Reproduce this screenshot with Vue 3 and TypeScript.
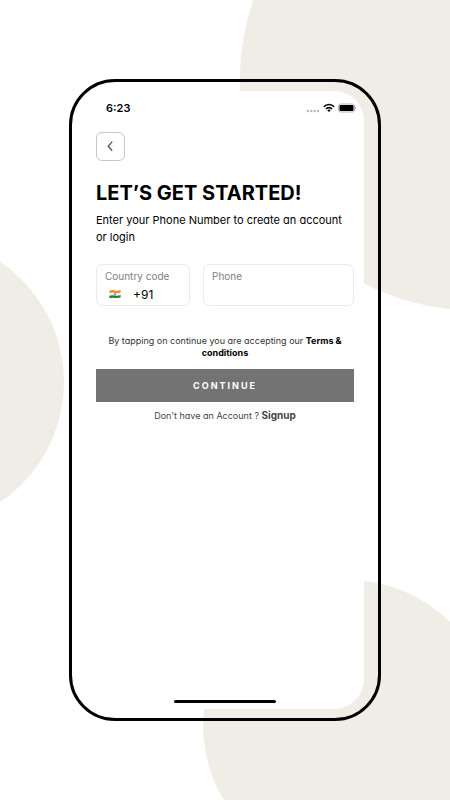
<script setup lang="ts">
import { ref } from 'vue'

const time = '6:23'
const countryCodes: string[] = ['+91']
const countryCode = ref<string>('+91')
const phone = ref<string>('')
</script>

<template>
  <main class="page">
    <svg class="backdrop" viewBox="0 0 450 800" preserveAspectRatio="xMidYMid slice" aria-hidden="true">
      <circle cx="472" cy="78" r="232" />
      <circle cx="-81" cy="382" r="145" />
      <circle cx="348" cy="725" r="145" />
    </svg>

    <div class="phone">
      <section class="screen">
        <header class="status">
          <span class="time">{{ time }}</span>
          <span class="indicators">
            <svg width="14" height="12" viewBox="0 0 14 12" aria-hidden="true">
              <g fill="#b9b9b9">
                <circle cx="1.8" cy="9" r="1.2" />
                <circle cx="5.2" cy="9" r="1.2" />
                <circle cx="8.6" cy="9" r="1.2" />
                <circle cx="12" cy="9" r="1.2" />
              </g>
            </svg>
            <svg width="12" height="12" viewBox="0 0 12 12" fill="none" stroke="#000" stroke-width="1.6" aria-hidden="true">
              <path d="M0.8 4.8C3.6 1.8 8.4 1.8 11.2 4.8" />
              <path d="M2.9 7C4.6 5.2 7.4 5.2 9.1 7" />
              <path d="M4.3 8.3Q6 6.9 7.7 8.3L6 10.1Z" fill="#000" stroke="none" />
            </svg>
            <svg width="18" height="12" viewBox="0 0 18 12" aria-hidden="true">
              <rect x="0.5" y="2" width="16" height="8" rx="2" fill="#fff" stroke="#a5a5a5" stroke-width="0.8" />
              <rect x="1.5" y="3" width="14" height="6" rx="1" fill="#000" />
              <path d="M17.2 4.6Q18 5 18 6T17.2 7.4Z" fill="#999" />
            </svg>
          </span>
        </header>

        <button class="back" type="button" aria-label="Back">
          <svg width="27" height="27" viewBox="0 0 27 27" fill="none" stroke="#555" stroke-width="1.3" aria-hidden="true">
            <path d="M15.2 8.6L11.2 13.2L15.2 17.8" />
          </svg>
        </button>

        <h1>LET’S GET STARTED!</h1>
        <p class="intro">Enter your Phone Number to create an account or login</p>

        <form class="form" @submit.prevent>
          <div class="fields">
            <div class="field">
              <label for="code">Country code</label>
              <div class="code">
                <svg class="flag" width="12" height="10" viewBox="0 0 12 10" aria-hidden="true">
                  <path d="M0.4 1.7Q3 0.6 6 1.4T11.6 1V3.8Q9 4.5 6 4T0.4 4.2Z" fill="#f28c28" />
                  <path d="M0.4 4Q3 3.2 6 3.9T11.6 3.4V6.4Q9 7 6 6.6T0.4 6.9Z" fill="#f1f1ec" />
                  <path d="M0.4 6.7Q3 5.8 6 6.5T11.6 6V8.6Q9 9.3 6 8.9T0.4 9.3Z" fill="#238536" />
                  <circle cx="6" cy="5.2" r="1" fill="#7777b5" />
                </svg>
                <select id="code" v-model="countryCode">
                  <option v-for="code in countryCodes" :key="code" :value="code">{{ code }}</option>
                </select>
              </div>
            </div>
            <div class="field wide">
              <label for="phone">Phone</label>
              <input id="phone" v-model="phone" type="tel" />
            </div>
          </div>

          <p class="terms">
            <span>By tapping on continue you are accepting our</span>
            {{ ' ' }}<a href="#terms"><span>Terms &amp;</span> <span>conditions</span></a>
          </p>
          <button class="continue" type="submit">CONTINUE</button>
        </form>

        <p class="signup">Don't have an Account ? <a href="#signup">Signup</a></p>

        <div class="home"></div>
      </section>
    </div>
  </main>
</template>

<style>
body {
  background: #fff;
}
</style>

<style scoped>
.page {
  position: relative;
  display: flex;
  box-sizing: border-box;
  min-height: 100vh;
  padding: 79px 69px;
  overflow: hidden;
  color: #000;
  font-family: Inter, "Liberation Sans", sans-serif;
  font-feature-settings: "cv11";
}

.backdrop {
  position: absolute;
  inset: 0;
  width: 100%;
  height: 100%;
  fill: #f0ede6;
}

.phone {
  position: relative;
  display: flex;
  flex: 1;
  padding: 9px 14px;
  border: 3px solid #000;
  border-radius: 46px;
}

.screen {
  display: flex;
  flex: 1;
  flex-direction: column;
  min-width: 0;
  padding: 10px 10px 6px;
  border-radius: 30px;
  background: #fff;
}

.status {
  display: flex;
  align-items: center;
  justify-content: space-between;
  height: 14px;
  padding-left: 10px;
}

.time {
  font-size: 11px;
  font-weight: 600;
}

.indicators {
  display: flex;
  gap: 3px;
  margin-right: -2px;
}

.back {
  width: 29px;
  height: 29px;
  margin-top: 17px;
  padding: 0;
  border: 1px solid #c8c8c8;
  border-radius: 6px;
  background: #fff;
}

.back svg {
  display: block;
}

h1 {
  margin: 20px 0 0;
  font-size: 20px;
  font-weight: 700;
  line-height: 24px;
}

.intro {
  margin: 7px 0 0;
  font-size: 11px;
  line-height: 17px;
}

.fields {
  display: flex;
  gap: 13px;
  margin-top: 18px;
}

.field {
  box-sizing: border-box;
  width: 94px;
  height: 42px;
  padding: 4px 8px;
  border: 1px solid #ebebeb;
  border-radius: 6px;
}

.wide {
  flex: 1;
}

label {
  display: block;
  color: #808080;
  font-size: 10px;
  line-height: 14px;
}

select,
input {
  width: 100%;
  height: 18px;
  padding: 0;
  border: 0;
  outline: 0;
  appearance: none;
  background: transparent;
  color: #000;
  font-family: inherit;
  font-size: 12px;
}

.code {
  display: flex;
  align-items: center;
  gap: 12px;
  padding: 2px 0 0 4px;
}

.flag {
  flex: none;
}

.terms {
  margin: 29px 0 0;
  color: #333;
  font-size: 9px;
  line-height: 12px;
  text-align: center;
}

.terms a {
  color: #000;
  font-weight: 700;
  text-decoration: none;
}

.continue {
  display: block;
  width: 100%;
  height: 33px;
  margin-top: 10px;
  padding: 0;
  border: 0;
  background: #737373;
  color: #fff;
  font-family: inherit;
  font-size: 9px;
  font-weight: 700;
  letter-spacing: 2px;
}

.signup {
  margin: 6px 0 0;
  color: #444;
  font-size: 9px;
  line-height: 14px;
  text-align: center;
}

.signup a {
  color: #444;
  font-size: 10px;
  font-weight: 700;
  text-decoration: none;
}

.home {
  width: 102px;
  height: 3px;
  margin: auto auto 0;
  border-radius: 2px;
  background: #000;
}
</style>
